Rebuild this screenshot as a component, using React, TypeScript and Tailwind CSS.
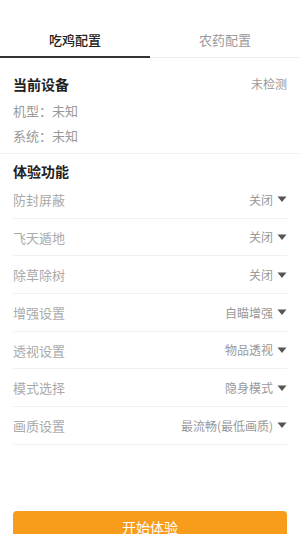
import React from "react";

const rows: [string, string][] = [
  ["防封屏蔽", "关闭"],
  ["飞天遁地", "关闭"],
  ["除草除树", "关闭"],
  ["增强设置", "自瞄增强"],
  ["透视设置", "物品透视"],
  ["模式选择", "隐身模式"],
  ["画质设置", "最流畅(最低画质)"],
];

function Caret() {
  return (
    <svg width="10" height="7" viewBox="0 0 10 7" className="ml-[4px]">
      <path d="M0.5 0.5 L9.5 0.5 L5 6 Z" fill="#555" />
    </svg>
  );
}

export default function App() {
  return (
    <div
      className="w-[300px] h-[534px] overflow-hidden bg-white"
      style={{ fontFamily: '"Noto Sans CJK SC", "Noto Sans", sans-serif' }}
    >
      {/* Tabs */}
      <div className="flex border-b border-[#eeeeee]">
        <div className="flex-1 flex flex-col items-center">
          <div className="pt-[31px] pb-[7px] text-[13px] leading-[18px] font-medium text-[#222]">吃鸡配置</div>
          <div className="w-full h-[2px] bg-[#333] mb-[-1px]" />
        </div>
        <div className="flex-1 flex flex-col items-center">
          <div className="pt-[31px] pb-[7px] text-[13px] leading-[18px] text-[#999]">农药配置</div>
        </div>
      </div>

      {/* Current device */}
      <div className="px-[13px] pt-[16px]">
        <div className="flex items-center justify-between h-[20px]">
          <span className="text-[14px] font-bold text-[#222]">当前设备</span>
          <span className="text-[12px] text-[#999]">未检测</span>
        </div>
        <div className="h-[25px] mt-[4px] flex items-center text-[13px] text-[#999]">机型：未知</div>
        <div className="h-[25px] flex items-center text-[13px] text-[#999]">系统：未知</div>
      </div>
      <div className="h-px bg-[#f0f0f0] mt-[5px]" />

      {/* Features */}
      <div className="px-[13px] pt-[7px]">
        <div className="h-[20px] flex items-center text-[14px] font-bold text-[#222]">体验功能</div>
        <div className="flex flex-col">
          {rows.map(([label, value]) => (
            <div
              key={label}
              className="h-[37.67px] pt-[1px] flex items-center justify-between border-b border-[#f0f0f0]"
            >
              <span className="text-[13px] text-[#aaa]">{label}</span>
              <span className="flex items-center text-[12px] text-[#999]">
                {value}
                <Caret />
              </span>
            </div>
          ))}
        </div>
      </div>

      {/* Button */}
      <div className="px-[13px] mt-[66px]">
        <button className="w-full h-[34px] rounded-[4px] bg-[#f89c1c] text-white text-[14px] flex items-center justify-center">
          开始体验
        </button>
      </div>
    </div>
  );
}
